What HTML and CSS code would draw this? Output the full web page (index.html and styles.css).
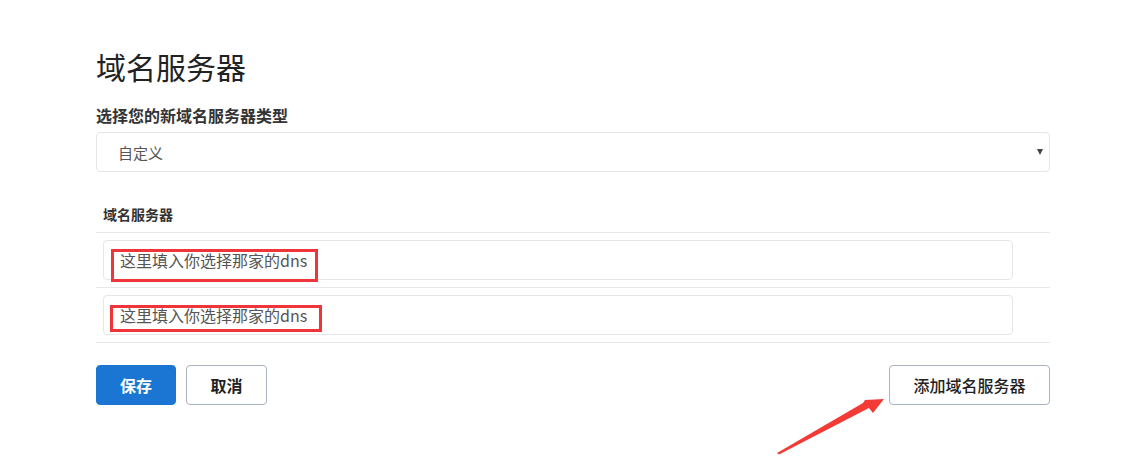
FILE: index.html
```html
<!DOCTYPE html>
<html lang="zh-CN">
<head>
  <meta charset="UTF-8">
  <title>域名服务器</title>
  <link rel="stylesheet" href="styles.css">
</head>
<body>
  <div class="container">
    <h1>域名服务器</h1>

    <!-- 类型选择 -->
    <div class="field">
      <label for="nsType">选择您的新域名服务器类型</label>
      <div class="select-wrap">
        <select id="nsType">
          <option>自定义</option>
        </select>
        <span class="caret"></span>
      </div>
    </div>

    <!-- 域名服务器列表 -->
    <table class="ns-table">
      <thead>
        <tr><th>域名服务器</th><th></th></tr>
      </thead>
      <tbody>
        <tr>
          <td>
            <div class="ns-cell">
              <input type="text" value="这里填入你选择那家的dns">
              <span class="mark mark-one"></span>
            </div>
          </td>
          <td class="ns-action"></td>
        </tr>
        <tr>
          <td>
            <div class="ns-cell">
              <input type="text" value="这里填入你选择那家的dns">
              <span class="mark mark-two"></span>
            </div>
          </td>
          <td class="ns-action"></td>
        </tr>
      </tbody>
    </table>

    <div class="actions">
      <div class="actions-left">
        <button class="btn btn-primary">保存</button>
        <button class="btn btn-default">取消</button>
      </div>
      <div class="add-wrap">
        <button class="btn btn-default btn-add">添加域名服务器</button>
        <!-- 标注箭头 -->
        <svg class="arrow" width="120" height="70" viewBox="0 0 120 70">
          <polygon points="0,62 86,12 88,9 107,8 96,22 92,17 2,63.5" fill="#f23b36"/>
        </svg>
      </div>
    </div>
  </div>
</body>
</html>
```

FILE: styles.css
```css
html, body {
  min-height: 476px;
}
body {
  margin: 0;
  background: #fff;
  font-family: "Microsoft YaHei", "Noto Sans CJK SC", "Noto Sans", sans-serif;
  color: #333;
}
.container {
  width: 954px;
  margin-left: 96px;
  padding-top: 44px;
  padding-bottom: 70px;
}
h1 {
  font-size: 30px;
  font-weight: normal;
  color: #222;
  margin: 0 0 17px;
  line-height: 44px;
}
.field label {
  display: block;
  font-size: 16px;
  font-weight: bold;
  color: #333;
  line-height: 20px;
  margin-bottom: 7px;
}
.select-wrap {
  position: relative;
}
select {
  display: block;
  width: 100%;
  height: 40px;
  padding: 0 0 0 21px;
  border: 1px solid #e6e6e6;
  border-radius: 4px;
  background: #fff;
  font-family: inherit;
  font-size: 15px;
  color: #555;
  appearance: none;
  -webkit-appearance: none;
}
.caret {
  position: absolute;
  right: 7px;
  top: 17px;
  border-left: 3px solid transparent;
  border-right: 3px solid transparent;
  border-top: 6px solid #444;
  pointer-events: none;
}
.ns-table {
  width: 100%;
  border-collapse: collapse;
  margin-top: 33px;
}
.ns-table th {
  text-align: left;
  font-size: 14px;
  font-weight: bold;
  color: #333;
  padding: 0 7px 8px;
  line-height: 19px;
  border-bottom: 1px solid #e8e8e8;
}
.ns-table td {
  padding: 7px 0 7px 7px;
  border-bottom: 1px solid #e8e8e8;
}
.ns-table .ns-action {
  width: 30px;
  padding: 0;
}
.ns-cell {
  position: relative;
  width: 910px;
}
.ns-cell input {
  display: block;
  box-sizing: border-box;
  width: 910px;
  height: 40px;
  padding: 0 0 0 16px;
  border: 1px solid #e6e6e6;
  border-radius: 4px;
  font-family: inherit;
  font-size: 16px;
  color: #555;
}
/* 红色标注框 */
.mark {
  position: absolute;
  border: 3px solid #f0353a;
  box-sizing: border-box;
  pointer-events: none;
}
.mark-one {
  left: 8px;
  top: 9px;
  width: 207px;
  height: 33px;
}
.mark-two {
  left: 7px;
  top: 10px;
  width: 212px;
  height: 27px;
}
.actions {
  display: flex;
  justify-content: space-between;
  margin-top: 22px;
}
.actions-left {
  display: flex;
  gap: 10px;
}
.btn {
  height: 40px;
  border-radius: 4px;
  font-family: inherit;
  font-size: 16px;
  font-weight: bold;
  cursor: pointer;
  padding: 0;
}
.btn-primary {
  width: 80px;
  background: #1a76d2;
  border: 1px solid #1a76d2;
  color: #fff;
}
.btn-default {
  width: 81px;
  background: #fff;
  border: 1px solid #a9b3bf;
  color: #222;
}
.add-wrap {
  position: relative;
}
.btn-add {
  width: 161px;
  font-weight: 500;
}
.arrow {
  position: absolute;
  left: -112px;
  top: 26px;
}
```
